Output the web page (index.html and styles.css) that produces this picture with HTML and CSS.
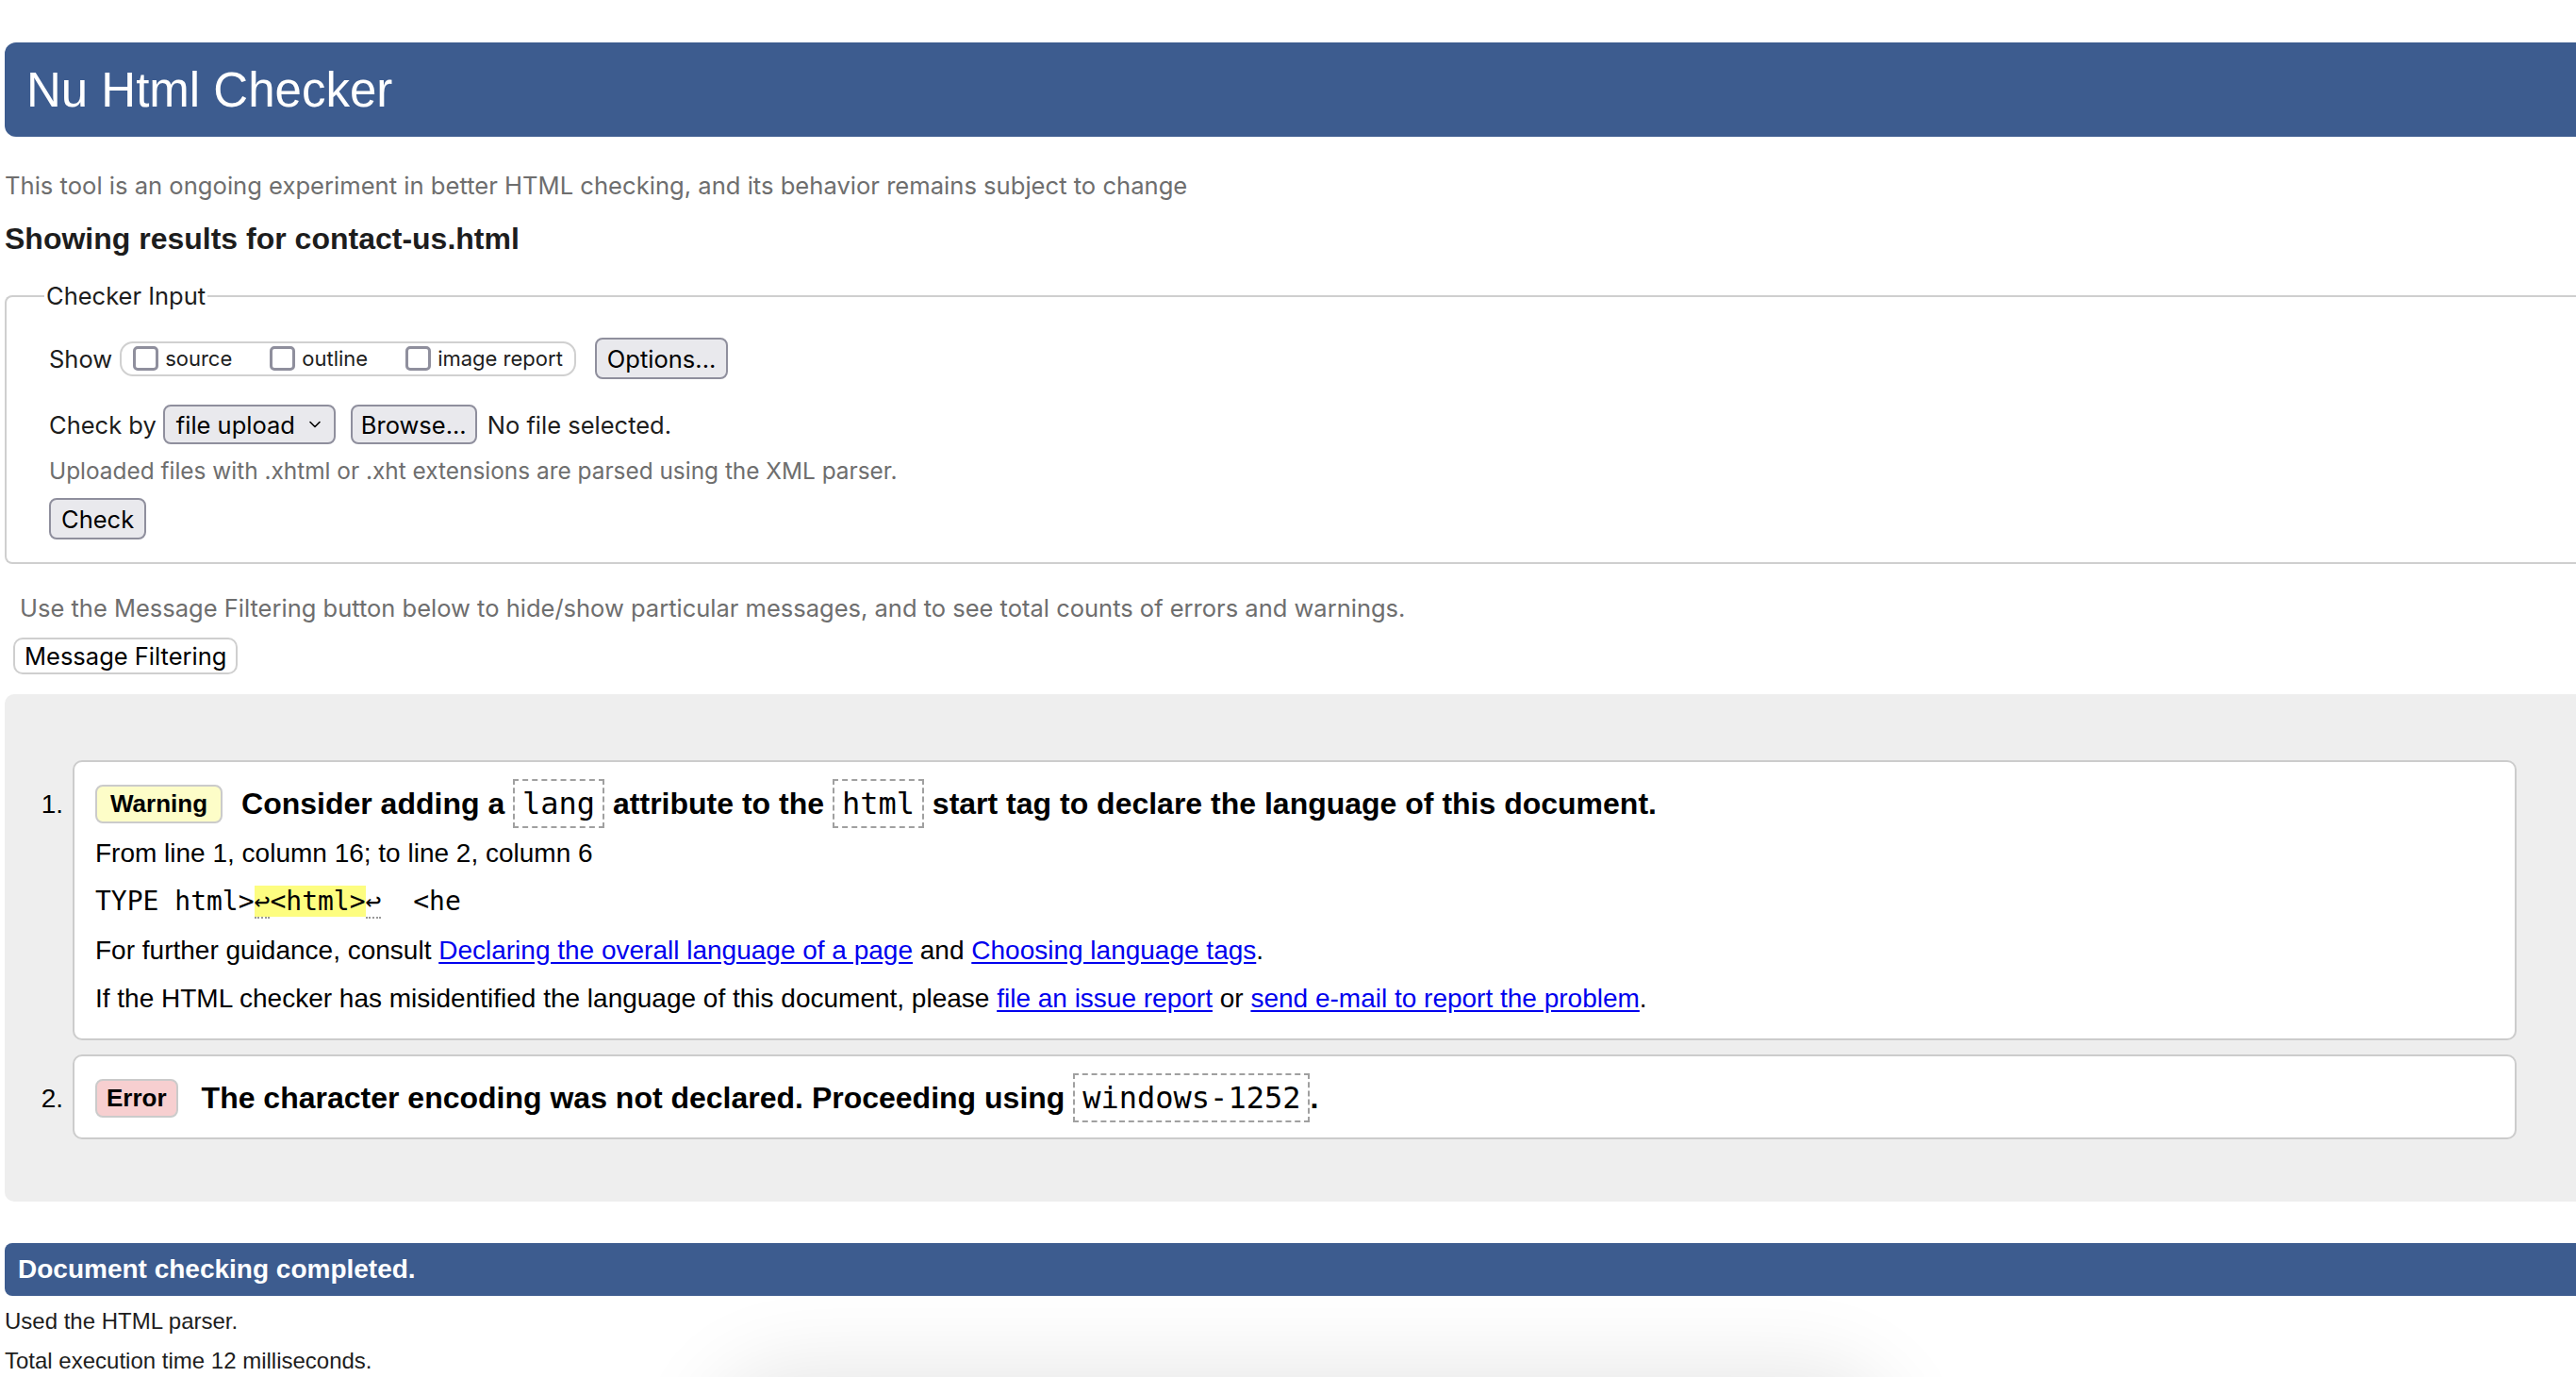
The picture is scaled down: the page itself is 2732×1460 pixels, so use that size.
FILE: index.html
```html
<!DOCTYPE html>
<html lang="en">
<head>
<meta charset="utf-8">
<title>Nu Html Checker</title>
<link rel="stylesheet" href="styles.css">
</head>
<body>
<header class="masthead"><h1>Nu Html Checker</h1></header>
<p class="intro">This tool is an ongoing experiment in better HTML checking, and its behavior remains subject to change</p>
<h2 class="results-title">Showing results for contact-us.html</h2>

<fieldset class="checker">
  <legend>Checker Input</legend>
  <div class="row row-show">
    <span class="label">Show</span>
    <div class="show-group">
      <label class="opt"><span class="cb"></span>source</label>
      <label class="opt"><span class="cb"></span>outline</label>
      <label class="opt"><span class="cb"></span>image report</label>
    </div>
    <button class="btn btn-options" type="button">Options...</button>
  </div>
  <div class="row row-check">
    <span class="label">Check by</span>
    <span class="select">file upload
      <svg class="chev" width="12" height="8" viewBox="0 0 12 8"><path d="M1 1.5 L6 6.5 L11 1.5" fill="none" stroke="#000" stroke-width="1.6" stroke-linecap="round" stroke-linejoin="round"/></svg>
    </span>
    <button class="btn btn-browse" type="button">Browse...</button>
    <span class="nofile">No file selected.</span>
  </div>
  <p class="hint">Uploaded files with .xhtml or .xht extensions are parsed using the XML parser.</p>
  <button class="btn btn-check" type="button">Check</button>
</fieldset>

<p class="filter-hint">Use the Message Filtering button below to hide/show particular messages, and to see total counts of errors and warnings.</p>
<button class="filter-btn" type="button">Message Filtering</button>

<section class="results">
  <ol class="messages">
    <li class="msg">
      <span class="num">1.</span>
      <div class="box">
        <p class="head"><strong class="badge badge-warning">Warning</strong>Consider adding a <code>lang</code> attribute to the <code>html</code> start tag to declare the language of this document.</p>
        <p>From line 1, column 16; to line 2, column 6</p>
        <p class="extract">TYPE html&gt;<mark><b class="lf">↩</b>&lt;html&gt;</mark><b class="lf">↩</b>  &lt;he</p>
        <p>For further guidance, consult <a href="#">Declaring the overall language of a page</a> and <a href="#">Choosing language tags</a>.</p>
        <p>If the HTML checker has misidentified the language of this document, please <a href="#">file an issue report</a> or <a href="#">send e-mail to report the problem</a>.</p>
      </div>
    </li>
    <li class="msg">
      <span class="num">2.</span>
      <div class="box">
        <p class="head"><strong class="badge badge-error">Error</strong>The character encoding was not declared. Proceeding using <code>windows-1252</code>.</p>
      </div>
    </li>
  </ol>
</section>

<div class="done">Document checking completed.</div>
<p class="meta meta-first">Used the HTML parser.</p>
<p class="meta">Total execution time 12 milliseconds.</p>

<div class="dock-shadow"></div>
</body>
</html>
```

FILE: styles.css
```css
* { box-sizing: border-box; }

html, body {
  margin: 0;
  padding: 0;
  background: #fff;
  overflow: hidden;
}

body {
  font-family: "Liberation Sans", Arial, Helvetica, sans-serif;
  color: #000;
  padding: 45px 0 0 5px;
  min-height: 1460px;
  position: relative;
}

/* ---------- masthead ---------- */
.masthead {
  background: #3d5c8f;
  height: 100px;
  border-radius: 12px 0 0 12px;
  display: flex;
  align-items: center;
  padding-left: 23px;
}
.masthead h1 {
  margin: 0;
  font-weight: normal;
  font-size: 51px;
  line-height: 1;
  color: #fff;
}

.intro {
  margin: 35px 0 0;
  font-family: Inter, "Noto Sans", sans-serif;
  font-size: 25.6px;
  line-height: 34px;
  color: #6e6e6e;
}

.results-title {
  margin: 21px 0 0;
  font-size: 32px;
  line-height: 37px;
  font-weight: bold;
  color: #1d1d1d;
}

/* ---------- checker fieldset ---------- */
.checker {
  margin: 27px 0 0;
  border: 2px solid #cfcfcf;
  border-right: none;
  border-radius: 8px 0 0 8px;
  padding: 0 0 24px 45px;
  font-family: Inter, "Noto Sans", sans-serif;
  font-size: 25.5px;
  color: #1d1d1d;
}
.checker legend {
  padding: 0 2px;
  margin-left: -5px;
  line-height: 30px;
}

.row {
  display: flex;
  align-items: center;
}
.row-show {
  margin-top: 29px;
  height: 44px;
}
.row-check {
  margin-top: 27px;
  height: 42px;
}

.show-group {
  display: flex;
  align-items: center;
  height: 37px;
  margin-left: 8px;
  padding: 0 12px;
  border: 2px solid #d0d0d0;
  border-radius: 14px;
}
.opt {
  display: flex;
  align-items: center;
  font-size: 22px;
  margin-right: 40px;
}
.opt:last-child { margin-right: 0; }
.cb {
  width: 27px;
  height: 26px;
  border: 3px solid #8f8f9d;
  border-radius: 5px;
  margin-right: 7px;
  background: #fff;
}

.btn,
.select {
  font-family: Inter, "Noto Sans", sans-serif;
  font-size: 25.5px;
  color: #000;
  background: #e9e9ed;
  border: 2px solid #8f8f9d;
  border-radius: 8px;
  height: 42px;
  padding: 0 11px;
  display: inline-flex;
  align-items: center;
}
.btn-options {
  margin-left: 20px;
  height: 44px;
}
.select {
  margin-left: 7px;
  width: 183px;
  padding: 0 14px 0 12px;
  justify-content: space-between;
}
.chev { display: block; }
.btn-browse {
  margin-left: 16px;
  padding: 0 9px;
}
.nofile { margin-left: 11px; }

.hint {
  margin: 13px 0 0;
  font-size: 24.4px;
  line-height: 30px;
  color: #6e6e6e;
}
.btn-check {
  margin-top: 14px;
  height: 44px;
}

/* ---------- message filtering ---------- */
.filter-hint {
  margin: 32px 0 0;
  padding-left: 16px;
  font-family: Inter, "Noto Sans", sans-serif;
  font-size: 25.5px;
  line-height: 30px;
  color: #6e6e6e;
}
.filter-btn {
  display: block;
  margin: 16px 0 0 9px;
  height: 39px;
  padding: 0 10px;
  background: #fff;
  border: 2px solid #cfcfcf;
  border-radius: 10px;
  font-family: Inter, "Noto Sans", sans-serif;
  font-size: 25.5px;
  color: #000;
}

/* ---------- results ---------- */
.results {
  margin-top: 21px;
  background: #eeeeee;
  border-radius: 10px 0 0 10px;
  padding: 70px 63px 66px 0;
}
.messages {
  list-style: none;
  margin: 0;
  padding: 0;
  display: flex;
  flex-direction: column;
  gap: 15px;
}
.msg {
  display: flex;
  align-items: flex-start;
}
.num {
  width: 72px;
  flex: none;
  padding: 21px 10px 0 0;
  text-align: right;
  font-size: 28px;
  line-height: 51.5px;
}
.box {
  flex: 1;
  background: #fff;
  border: 2px solid #cccccc;
  border-radius: 10px;
  padding: 19px 22px 16px;
}
.box p {
  margin: 0;
  font-size: 28px;
  line-height: 51.5px;
}
.box p.head {
  font-size: 32px;
  font-weight: bold;
}
.badge {
  display: inline-block;
  font-size: 26px;
  line-height: 37px;
  padding: 0 13px;
  margin-right: 20px;
  border: 2px solid #cbcbcb;
  border-radius: 8px;
  vertical-align: 2px;
}
.badge-warning {
  background: #fdfdc8;
  padding: 0 14px;
}
.badge-error {
  background: #f7cfd0;
  padding: 0 10px;
  margin-right: 25px;
}

code {
  font-family: "DejaVu Sans Mono", "Liberation Mono", monospace;
  font-weight: normal;
  font-size: 32px;
  padding: 5px 8px;
  border: 2px dashed #a0a0a0;
}

.box p.extract {
  font-family: "DejaVu Sans Mono", "Liberation Mono", monospace;
  font-size: 28px;
  white-space: pre;
}
mark {
  background: #fdfd80;
  color: #000;
}
.lf {
  font-weight: normal;
  border-bottom: 2px dotted #999;
}

a {
  color: #0000ee;
  text-decoration: underline;
  text-underline-offset: 3px;
}

/* ---------- footer ---------- */
.done {
  margin-top: 44px;
  height: 56px;
  line-height: 56px;
  padding-left: 14px;
  background: #3d5c8f;
  border-radius: 8px 0 0 8px;
  color: #fff;
  font-size: 28px;
  font-weight: bold;
}
.meta {
  margin: 12px 0 0;
  font-size: 24px;
  line-height: 30px;
  color: #1d1d1d;
}

.dock-shadow {
  position: absolute;
  left: 780px;
  top: 1480px;
  width: 1200px;
  height: 120px;
  border-radius: 60px;
  box-shadow: 0 0 90px 30px rgba(0, 0, 0, 0.10);
}
```
